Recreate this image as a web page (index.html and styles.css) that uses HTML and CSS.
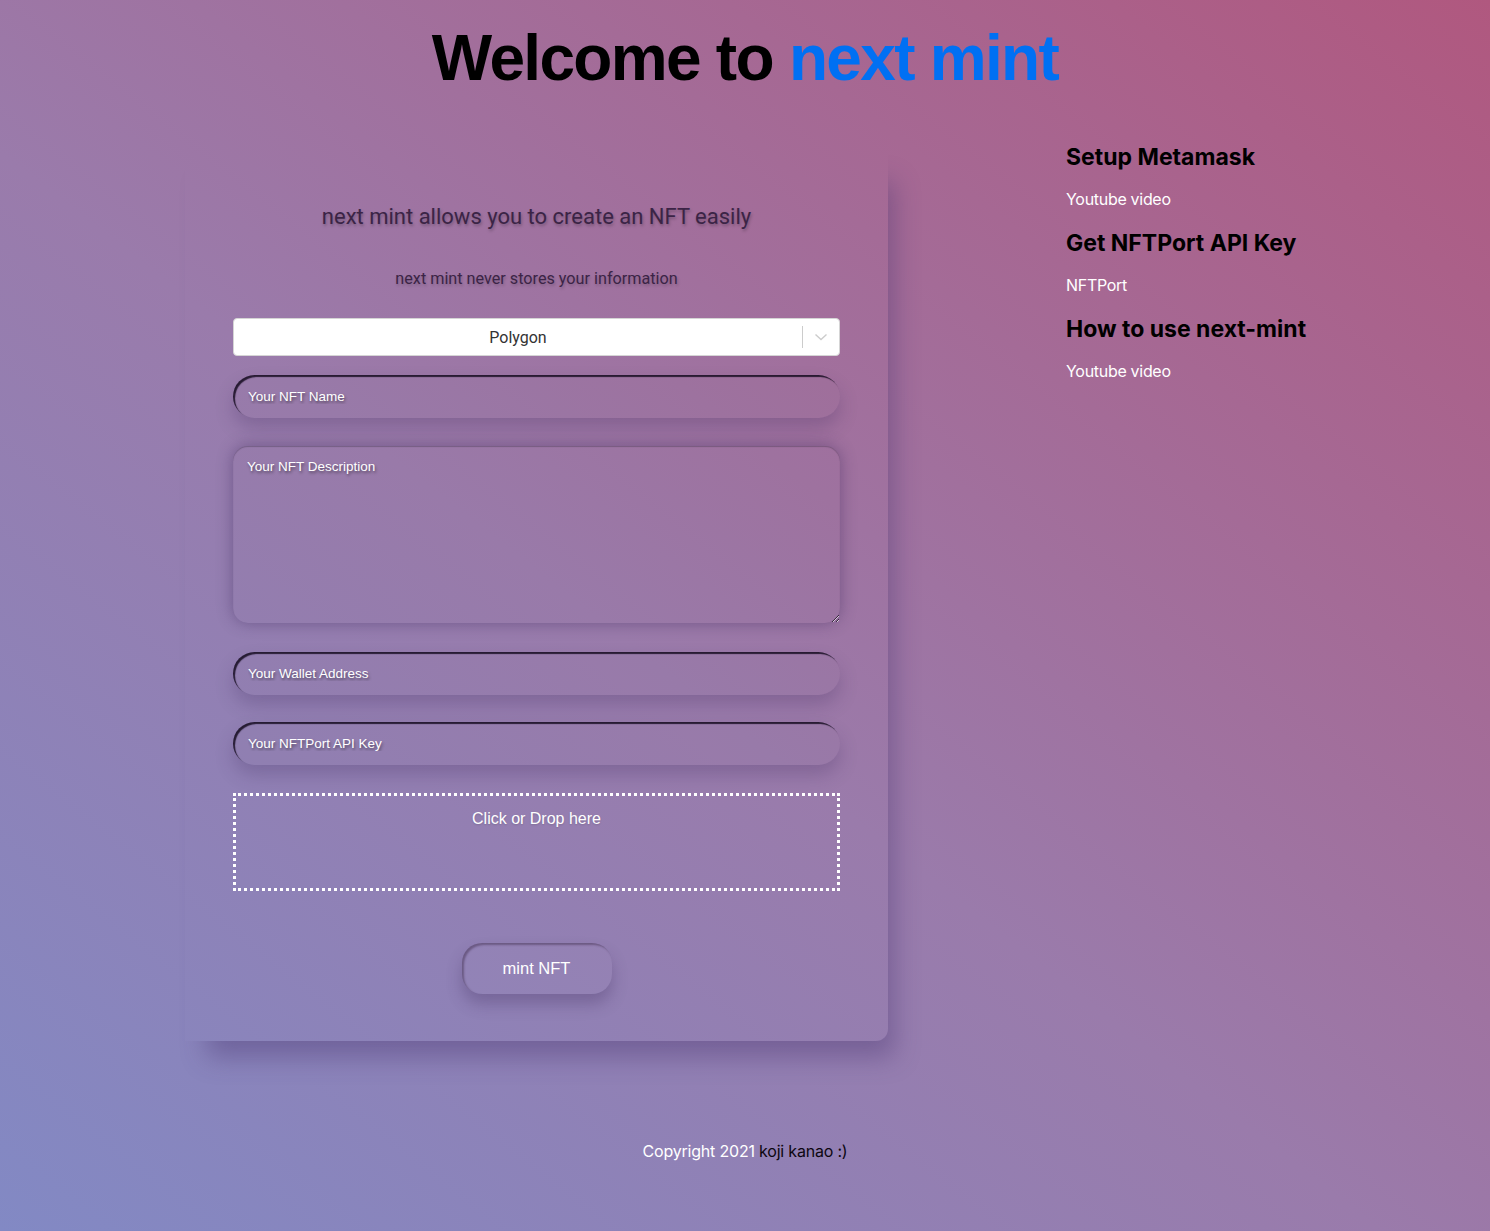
FILE: index.html
```html
<!DOCTYPE html>
<html lang="en">
<head>
<meta charset="utf-8">
<title>next mint</title>
<link rel="stylesheet" href="styles.css">
</head>
<body>
<div class="page">
  <h1 class="title">Welcome to <span class="accent">next mint</span></h1>
  <div class="row">
    <div class="card">
      <p class="lead">next mint allows you to create an NFT easily</p>
      <p class="note">next mint never stores your information</p>
      <div class="select">
        <div class="select-value">Polygon</div>
        <span class="select-sep"></span>
        <span class="select-arrow">
          <svg width="20" height="20" viewBox="0 0 20 20"><path d="M4.5 7.5 L10 12.5 L15.5 7.5" fill="none" stroke="#cccccc" stroke-width="1.4"/></svg>
        </span>
      </div>
      <input class="field" type="text" placeholder="Your NFT Name">
      <textarea class="area" placeholder="Your NFT Description"></textarea>
      <input class="field gap-lg" type="text" placeholder="Your Wallet Address">
      <input class="field" type="text" placeholder="Your NFTPort API Key">
      <div class="drop">Click or Drop here</div>
      <div class="btn-wrap"><button class="btn">mint NFT</button></div>
    </div>
    <aside class="side">
      <h3 class="side-h">Setup Metamask</h3>
      <a class="side-a">Youtube video</a>
      <h3 class="side-h">Get NFTPort API Key</h3>
      <a class="side-a">NFTPort</a>
      <h3 class="side-h">How to use next-mint</h3>
      <a class="side-a">Youtube video</a>
    </aside>
  </div>
  <footer class="foot">Copyright 2021 <a class="foot-a">koji kanao :)</a></footer>
</div>
</body>
</html>
```
FILE: styles.css
```css
* { box-sizing: border-box; }
html, body { margin: 0; padding: 0; }
body {
  min-height: 1231px;
  background: linear-gradient(38deg, #8289c4 0%, #9a7bab 45%, #b0587f 100%);
  font-family: Roboto, "Noto Sans", sans-serif;
  color: #fff;
}
.page { width: 1490px; min-height: 1231px; display: flex; flex-direction: column; }
.title {
  margin: 24px 0 0;
  text-align: center;
  font-family: "Liberation Sans", Arial, sans-serif;
  font-weight: 700;
  font-size: 64px;
  line-height: 68px;
  letter-spacing: -1.7px;
  color: #000;
}
.accent { color: #0070f3; }
.row { display: flex; align-items: flex-start; margin-top: 51px; padding-left: 185px; }
.card {
  width: 703px;
  height: 891px;
  margin-top: 7px;
  border-radius: 0 0 12px 0;
  padding: 53px 48px 0;
  background: rgba(255,255,255,0.005);
  box-shadow: 14px 24px 26px -8px rgba(70,50,110,0.4);
  display: flex;
  flex-direction: column;
}
.lead {
  margin: 0;
  text-align: center;
  font-size: 22px;
  line-height: 28px;
  color: #3b2446;
  text-shadow: 1px 2px 3px rgba(0,0,0,0.25);
}
.note {
  margin: 38px 0 0;
  text-align: center;
  font-size: 16.2px;
  line-height: 20px;
  color: #3b2446;
  text-shadow: 1px 2px 3px rgba(0,0,0,0.2);
}
.select {
  margin-top: 29px;
  height: 38px;
  background: #fff;
  border: 1px solid #d5d5d5;
  border-radius: 4px;
  display: flex;
  align-items: center;
}
.select-value { flex: 1; text-align: center; color: #333; font-size: 16px; }
.select-sep { width: 1px; height: 22px; background: #ccc; }
.select-arrow { width: 36px; display: flex; justify-content: center; align-items: center; }
.field {
  display: block;
  width: 100%;
  height: 43px;
  margin-top: 19px;
  border: none;
  outline: none;
  border-radius: 22px;
  padding: 0 15px;
  background: rgba(120,90,140,0.04);
  box-shadow: inset 2px 2px 1px rgba(20,10,30,0.85), 0 10px 18px rgba(60,40,90,0.25);
  font-family: "Liberation Sans", Arial, sans-serif;
  font-size: 13.5px;
  color: #fff;
}
.field::placeholder, .area::placeholder { color: #fff; text-shadow: 1px 2px 3px rgba(0,0,0,0.45); opacity: 1; }
.area {
  display: block;
  width: 100%;
  height: 177px;
  margin-top: 28px;
  border: none;
  outline: none;
  border-radius: 15px;
  padding: 13px 14px;
  resize: vertical;
  background: rgba(120,90,140,0.03);
  box-shadow: 0 0 16px rgba(60,40,90,0.45), inset 0 1px 1px rgba(40,30,50,0.3);
  font-family: "Liberation Sans", Arial, sans-serif;
  font-size: 13.5px;
  color: #fff;
}
.gap-lg { margin-top: 29px; }
.field + .field { margin-top: 27px; }
.drop {
  margin-top: 28px;
  height: 98px;
  border: 3px dotted #fff;
  text-align: center;
  padding-top: 14px;
  font-family: "Liberation Sans", Arial, sans-serif;
  font-size: 16px;
  color: #fff;
  text-shadow: 0 1px 2px rgba(0,0,0,0.15);
}
.btn-wrap { display: flex; justify-content: center; margin-top: 52px; }
.btn {
  width: 150px;
  height: 51px;
  border: none;
  border-radius: 20px;
  background: rgba(255,255,255,0.02);
  box-shadow: inset 2px 2px 2px rgba(60,40,70,0.45), 0 10px 16px rgba(60,40,90,0.3);
  font-family: "Liberation Sans", Arial, sans-serif;
  font-size: 16.5px;
  color: #fff;
}
.side { margin-left: 178px; display: flex; flex-direction: column; }
.side-h {
  margin: 0;
  font-family: Inter, sans-serif;
  font-weight: 700;
  font-size: 23px;
  line-height: 28px;
  color: #000;
}
.side-a { margin: 18px 0 20px; font-family: Inter, sans-serif; font-size: 16px; line-height: 20px; color: #fff; letter-spacing: -0.3px; }
.foot {
  margin-top: 100px;
  text-align: center;
  font-family: Inter, sans-serif;
  font-size: 16px;
  letter-spacing: -0.2px;
  color: #fff;
}
.foot-a { color: #0d0710; }
```
